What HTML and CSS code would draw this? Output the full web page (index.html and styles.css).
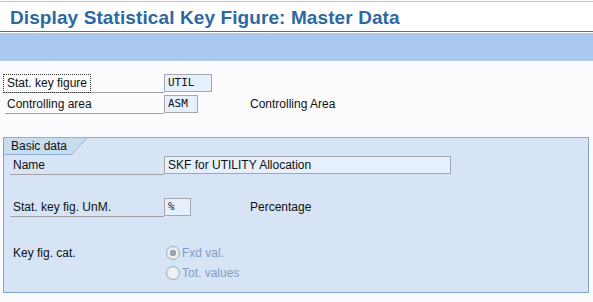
FILE: index.html
```html
<!DOCTYPE html>
<html lang="en">
<head>
    <meta charset="UTF-8">
    <title>Display Statistical Key Figure: Master Data</title>
    <link rel="stylesheet" href="styles.css">
</head>
<body>

    <!-- Title -->
    <div class="titlebar">
        <h1>Display Statistical Key Figure: Master Data</h1>
    </div>
    <div class="toolbar"></div>

    <!-- Header fields -->
    <div class="header">
        <div class="row">
            <span class="label"><span class="focus">Stat. key figure</span></span>
            <span class="field w-util">UTIL</span>
        </div>
        <div class="row">
            <span class="label">Controlling area</span>
            <span class="field w-asm">ASM</span>
            <span class="desc">Controlling Area</span>
        </div>
    </div>

    <!-- Basic data group -->
    <div class="group">
        <div class="tab">Basic data</div>
        <div class="row">
            <span class="label">Name</span>
            <span class="field text w-name">SKF for UTILITY Allocation</span>
        </div>
        <div class="row unm">
            <span class="label">Stat. key fig. UnM.</span>
            <span class="field w-unit">%</span>
            <span class="desc">Percentage</span>
        </div>
        <div class="radios">
            <span class="plain">Key fig. cat.</span>
            <div class="options">
                <label class="option"><span class="radio checked"></span>Fxd val.</label>
                <label class="option"><span class="radio"></span>Tot. values</label>
            </div>
        </div>
    </div>

</body>
</html>
```

FILE: styles.css
```css
body {
    margin: 0;
    background: #fbfbfd;
    font-family: "Liberation Sans", Arial, sans-serif;
    font-size: 12px;
    color: #111;
}
.titlebar {
    margin-top: 1px;
    height: 29px;
    background: #fff;
    border-top: 1px solid #c4c4c4;
    border-bottom: 1px solid #3f74aa;
}
h1 {
    margin: 0;
    padding: 5px 0 0 10px;
    font-size: 19px;
    font-weight: bold;
    color: #2d68a1;
    line-height: 21px;
    letter-spacing: 0.1px;
}
.toolbar {
    height: 28px;
    background: #aac8ee;
    border-top: 1px solid #fff;
    border-bottom: 1px solid #fff;
}
.header {
    padding: 12px 0 0 5px;
}
.row {
    display: flex;
    align-items: flex-start;
    height: 19px;
    margin-bottom: 2px;
}
.label {
    width: 158px;
    height: 17px;
    padding-top: 1px;
    line-height: 17px;
    border-bottom: 1px solid #a2a2a6;
    box-sizing: content-box;
}
.header .label {
    padding-left: 2px;
    width: 157px;
}
.header .label .focus {
    display: inline-block;
    margin: -1px 0 0 -4px;
    height: 17px;
    padding: 0 3px 0 3px;
    border: 1px dotted #333;
    line-height: 17px;
}
.field {
    height: 18px;
    box-sizing: border-box;
    border: 1px solid #a6a6ae;
    background: #e6f0fd;
    font-family: "DejaVu Sans Mono", "Liberation Mono", monospace;
    font-size: 11px;
    line-height: 16px;
    padding-left: 3px;
    color: #111;
}
.field.text {
    font-family: "Liberation Sans", Arial, sans-serif;
    font-size: 12px;
}
.w-util { width: 48px; }
.w-asm { width: 34px; }
.w-name { width: 287px; }
.w-unit { width: 27px; }
.desc {
    margin-left: 51px;
    line-height: 19px;
}
.w-asm + .desc { margin-left: 52px; }
.w-unit + .desc { margin-left: 59px; }
.group {
    margin: 23px 0 0 3px;
    width: 586px;
    height: 156px;
    box-sizing: border-box;
    border: 1px solid #7ea4cd;
    border-top-color: #8fb1d6;
    background: #d6e4f6;
}
.tab {
    position: relative;
    width: 60px;
    height: 16px;
    padding-left: 7px;
    line-height: 16px;
    background: #c6ddef;
    border-bottom: 1px solid #8fb0d4;
}
.tab::after {
    content: "";
    position: absolute;
    left: 100%;
    top: 0;
    width: 16px;
    height: 17px;
    background: linear-gradient(to bottom right, #c6ddef calc(50% - 0.6px), #8fb0d4 50%, transparent calc(50% + 0.6px));
}
.group .row {
    margin: 1px 0 0 6px;
}
.group .label {
    width: 151px;
    padding-left: 3px;
}
.group .row.unm {
    margin-top: 23px;
}
.radios {
    display: flex;
    margin: 25px 0 0 9px;
}
.plain {
    width: 153px;
    line-height: 18px;
    padding-top: 2px;
}
.options {
    display: flex;
    flex-direction: column;
    gap: 4px;
    padding-top: 3px;
}
.option {
    display: flex;
    align-items: center;
    gap: 2px;
    color: #7f9dc1;
    height: 16px;
}
.radio {
    width: 12px;
    height: 12px;
    border-radius: 50%;
    border: 1px solid #a3acb8;
    background: radial-gradient(circle, #f6f7f9 0, #e2e6ec 100%);
}
.radio.checked {
    background: radial-gradient(circle, #9aa3ae 0, #9aa3ae 3px, #eef0f3 3.5px, #e2e6ec 100%);
}
```
